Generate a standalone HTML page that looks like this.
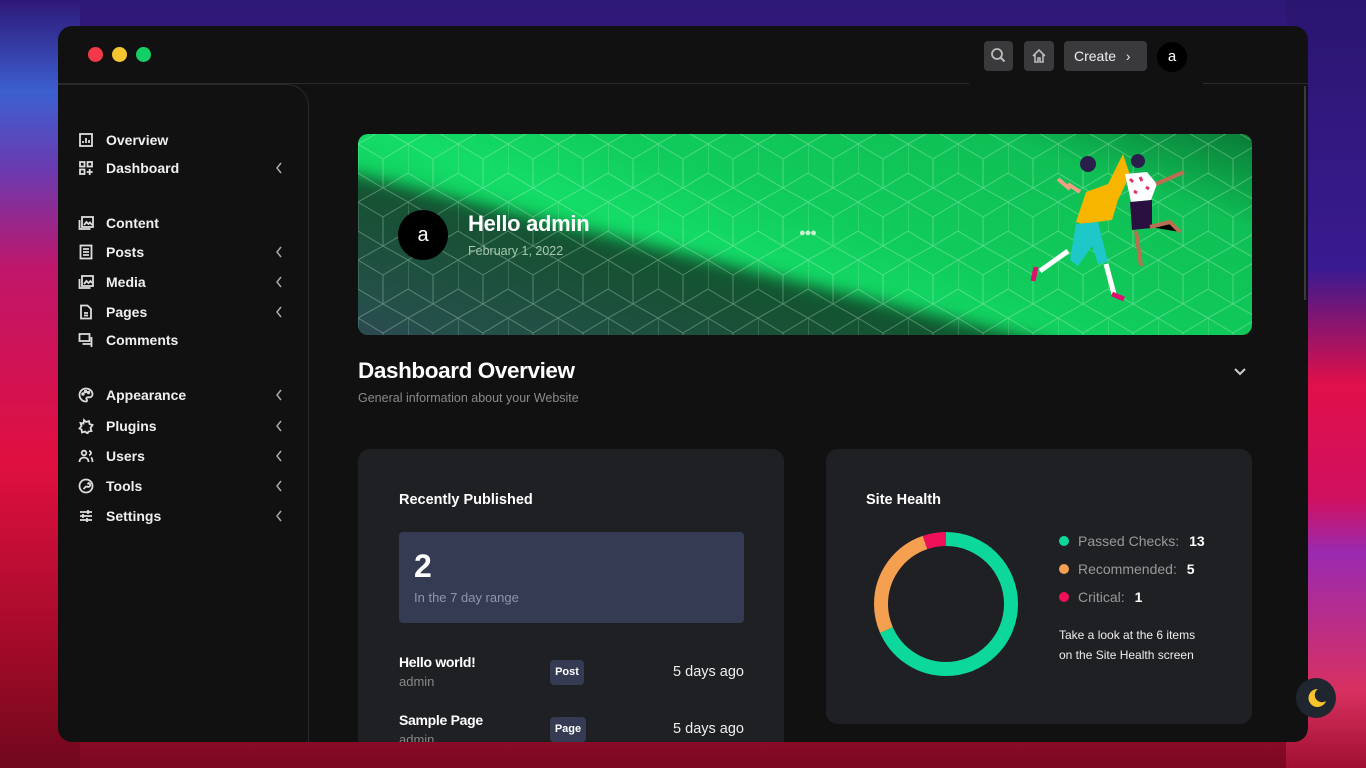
<!DOCTYPE html>
<html><head><meta charset="utf-8"><style>
*{margin:0;padding:0;box-sizing:border-box}
body{width:1366px;height:768px;overflow:hidden;position:relative;font-family:"Liberation Sans",sans-serif;
background:linear-gradient(180deg,#2e1878 0%,#3a1a80 30%,#7a1a70 55%,#c8104a 75%,#a00c30 92%,#7a0820 100%);}
.bgl{position:absolute;left:0;top:0;width:80px;height:768px;background:linear-gradient(180deg,#2e1878 0%,#3c60d0 12%,#6a3ab0 22%,#c0166a 35%,#e01040 60%,#a00a28 85%,#70081c 100%)}
.bgr{position:absolute;right:0;top:0;width:80px;height:768px;background:linear-gradient(180deg,#2a1670 0%,#3a1a90 35%,#e0104a 50%,#d01060 65%,#9a2ab0 72%,#d83060 90%,#a01030 100%)}
.win{position:absolute;left:58px;top:26px;width:1250px;height:716px;background:#111112;border-radius:14px;overflow:hidden}
.dot{position:absolute;top:21px;width:15px;height:15px;border-radius:50%}
.hline{position:absolute;top:57px;left:0;width:1250px;height:1px;background:#2a2a2c}
.side{position:absolute;left:0;top:58px;width:251px;height:700px;border-right:1px solid #2a2a2c;border-top-right-radius:22px;border-top:1px solid #2a2a2c}
.nav{position:absolute;left:20px;color:#f0f0f0;font-size:14px;font-weight:bold;display:flex;align-items:center;height:20px}
.nav svg{width:16px;height:16px;margin-right:12px;stroke:#ddd;fill:none;stroke-width:1.8}
.btn{position:absolute;top:15px;height:30px;background:#3a3a3c;border-radius:4px;color:#eee;font-size:14px}
.banner{position:absolute;left:300px;top:108px;width:894px;height:201px;border-radius:10px;overflow:hidden;
background:linear-gradient(200deg,#0a7a36 0%,#0fbf55 18%,#10cc5c 45%,#14dc68 60%,#0ec85a 80%,#0cc056 100%)}
.card{position:absolute;top:423px;width:426px;background:#1f2024;border-radius:12px}
</style></head><body>
<div class="bgl"></div><div class="bgr"></div>
<div class="win">
<div class="dot" style="left:30px;background:#f2394a"></div>
<div class="dot" style="left:54px;background:#f4c531"></div>
<div class="dot" style="left:78px;background:#14cf63"></div>
<div class="hline"></div>
<div style="position:absolute;left:911px;top:56px;width:234px;height:4px;background:#111112"></div>
<div class="btn" style="left:926px;width:29px"><svg width="29" height="30" viewBox="0 0 29 30"><circle cx="13" cy="13" r="5" stroke="#bbb" stroke-width="1.8" fill="none"/><path d="M16.5 16.5l4 4" stroke="#bbb" stroke-width="2"/></svg></div>
<div class="btn" style="left:966px;width:30px"><svg width="30" height="30" viewBox="0 0 30 30"><path d="M9 15l6-6 6 6M11 13v8h3v-4h2v4h3v-8" stroke="#bbb" stroke-width="1.6" fill="none"/></svg></div>
<div class="btn" style="left:1006px;width:83px;line-height:30px;padding-left:10px">Create <span style="margin-left:6px">›</span></div>
<div style="position:absolute;left:1099px;top:16px;width:30px;height:30px;border-radius:50%;background:#000;color:#fff;text-align:center;line-height:30px;font-size:15px">a</div>
<div style="position:absolute;left:1246px;top:60px;width:2px;height:214px;background:#3a3a3c"></div>
<div class="side"></div>
<div class="nav" style="top:104px"><svg viewBox="0 0 16 16"><rect x="2" y="2" width="12" height="12"/><path d="M5 11v-2M8 11V6M11 11V8"/></svg>Overview</div>
<div class="nav" style="top:132px"><svg viewBox="0 0 16 16"><rect x="2" y="2" width="4.5" height="4.5"/><rect x="9.5" y="2" width="4.5" height="4.5"/><rect x="2" y="9.5" width="4.5" height="4.5"/><path d="M11.7 9v6M8.7 12h6"/></svg>Dashboard</div>
<div class="nav" style="top:187px"><svg viewBox="0 0 16 16"><rect x="4" y="2" width="11" height="10"/><path d="M1.5 5v9h11M6 10l2.5-3 2 2 1.5-1.5 2 2.5"/></svg>Content</div>
<div class="nav" style="top:216px"><svg viewBox="0 0 16 16"><rect x="2.5" y="1.5" width="11" height="13"/><path d="M5 5h6M5 8h6M5 11h6"/></svg>Posts</div>
<div class="nav" style="top:246px"><svg viewBox="0 0 16 16"><rect x="4" y="2" width="11" height="10"/><path d="M1.5 5v9h11M6 10l2.5-3 2 2 2-2 1.5 2"/></svg>Media</div>
<div class="nav" style="top:276px"><svg viewBox="0 0 16 16"><path d="M3 1.5h6.5l3.5 3.5v9.5H3z"/><path d="M6 9h4M6 11.5h4"/></svg>Pages</div>
<div class="nav" style="top:304px"><svg viewBox="0 0 16 16"><path d="M1.5 2h10v7h-10zM4.5 12h9V5M13.5 12v3"/></svg>Comments</div>
<div class="nav" style="top:359px"><svg viewBox="0 0 16 16"><path d="M8 1.5a6.5 6.5 0 1 0 0 13c1.2 0 1.3-1.5.6-2.2s-.2-2 1-2h2a3 3 0 0 0 2.9-3C14.5 4 11.6 1.5 8 1.5z"/><circle cx="5" cy="7" r=".8"/><circle cx="7.5" cy="4.5" r=".8"/><circle cx="10.5" cy="5.5" r=".8"/></svg>Appearance</div>
<div class="nav" style="top:390px"><svg viewBox="0 0 16 16"><path d="M6 2l2 2 3-1 .5 3 3 1-2 3 1 3-3 .5-1 2-2.5-2-3 1-.5-3-2-1 2-2.5-1-3 3 .5z"/></svg>Plugins</div>
<div class="nav" style="top:420px"><svg viewBox="0 0 16 16"><circle cx="6" cy="5" r="2.3"/><path d="M1.5 14c0-3 2-4.5 4.5-4.5s4.5 1.5 4.5 4.5M11 3a2 2 0 0 1 0 4M13 9.5c1 .6 1.5 2 1.5 4.5"/></svg>Users</div>
<div class="nav" style="top:450px"><svg viewBox="0 0 16 16"><circle cx="8" cy="8" r="6.5"/><path d="M5.5 11l3-3M8.5 8a2 2 0 1 0 2.2-3l-1.2 1.3"/></svg>Tools</div>
<div class="nav" style="top:480px"><svg viewBox="0 0 16 16"><path d="M2 4h12M2 8h12M2 12h12M10 2v4M5 6v4M9 10v4"/></svg>Settings</div>
<svg width="250" height="500" style="position:absolute;left:0;top:0" fill="none" stroke="#aaa" stroke-width="1.5">
<path d="M223 137l-4 5 4 5M223 221l-4 5 4 5M223 251l-4 5 4 5M223 281l-4 5 4 5M223 364l-4 5 4 5M223 395l-4 5 4 5M223 425l-4 5 4 5M223 455l-4 5 4 5M223 485l-4 5 4 5"/></svg>

<div class="banner">
<div style="position:absolute;left:-20px;top:0;width:934px;height:240px;filter:blur(8px)">
<div style="position:absolute;left:0;top:0;width:934px;height:240px;clip-path:polygon(0 36px,840px 240px,0 240px);background:linear-gradient(196deg,#0a6a30 38%,#0b5a2a 50%,#1a5038 68%,#24504a 85%,#3a3e60 100%)"></div></div>
<svg width="894" height="201" style="position:absolute;left:0;top:0;opacity:.3">
<defs><pattern id="hx" width="50" height="58" patternUnits="userSpaceOnUse" x="0" y="-4"><path d="M0 14L25 0L50 14M0 14V43M25 29V58M0 43L25 58L50 43M25 29L50 14M25 29L0 14" stroke="#e8ffe8" stroke-width="1" fill="none"/></pattern></defs>
<rect width="894" height="201" fill="url(#hx)"/></svg>
<div style="position:absolute;left:40px;top:76px;width:50px;height:50px;border-radius:50%;background:#000;color:#fff;font-size:20px;text-align:center;line-height:50px">a</div>
<div style="position:absolute;left:110px;top:77px;color:#fff;font-size:22px;font-weight:bold;letter-spacing:-.3px">Hello admin</div>
<div style="position:absolute;left:110px;top:110px;color:#a8c8b0;font-size:12.5px">February 1, 2022</div>
<div style="position:absolute;left:441px;top:93px;color:#c8f0d0;font-size:11px;letter-spacing:-1px">●●●</div>
<svg width="200" height="170" viewBox="0 0 200 170" style="position:absolute;left:670px;top:5px">
<path d="M95 15l-15 30-22 8-10 30 6 2 30-4 6-20 12-25z" fill="#f7b500"/>
<circle cx="60" cy="25" r="8" fill="#2a1e4a"/>
<path d="M40 45l12 8M30 40l12 10" stroke="#f0a080" stroke-width="4"/>
<path d="M48 85l22-2 10 40-10 2-6-18-14 20-8-6z" fill="#1ec8c8"/>
<path d="M40 112l-28 20M78 125l8 30" stroke="#fff" stroke-width="5"/>
<path d="M8 128l-3 14M84 155l12 5" stroke="#e01070" stroke-width="5"/>
<circle cx="110" cy="22" r="7" fill="#2a1e4a"/>
<path d="M97 35l22-2 10 12-6 16-20 2z" fill="#fff"/><path d="M102 40l3 3M112 38l2 4M118 48l3 2M106 52l3 2" stroke="#e0306a" stroke-width="3"/>
<path d="M102 63l22-2 0 28-20 2z" fill="#2a1040"/>
<path d="M108 92l5 35M122 88l20-5 10 10M128 45l28-12" stroke="#b87050" stroke-width="4"/>
</svg>
</div>

<div style="position:absolute;left:300px;top:332px;color:#fff;font-size:22.5px;font-weight:bold;letter-spacing:-.4px">Dashboard Overview</div>
<div style="position:absolute;left:300px;top:365px;color:#8a8a8e;font-size:12.5px">General information about your Website</div>
<svg width="14" height="10" style="position:absolute;left:1175px;top:341px"><path d="M2 2l5 5 5-5" stroke="#ccc" stroke-width="2" fill="none"/></svg>

<div class="card" style="left:300px;height:320px">
<div style="position:absolute;left:41px;top:43px;color:#fff;font-size:14.5px;font-weight:bold">Recently Published</div>
<div style="position:absolute;left:41px;top:83px;width:345px;height:91px;background:#343b53;border-radius:4px">
<div style="position:absolute;left:15px;top:16px;color:#fff;font-size:32px;font-weight:bold">2</div>
<div style="position:absolute;left:15px;top:58px;color:#8f96a8;font-size:13px">In the 7 day range</div></div>
<div style="position:absolute;left:41px;top:205px;color:#fff;font-size:14px;font-weight:bold;letter-spacing:-.3px">Hello world!</div>
<div style="position:absolute;left:41px;top:225px;color:#888;font-size:13px">admin</div>
<div style="position:absolute;left:192px;top:211px;width:34px;height:25px;background:#343b53;border-radius:4px;color:#fff;font-size:11px;font-weight:bold;text-align:center;line-height:25px">Post</div>
<div style="position:absolute;right:40px;top:215px;color:#eee;font-size:14.5px">5 days ago</div>
<div style="position:absolute;left:41px;top:263px;color:#fff;font-size:14px;font-weight:bold;letter-spacing:-.3px">Sample Page</div>
<div style="position:absolute;left:41px;top:283px;color:#888;font-size:13px">admin</div>
<div style="position:absolute;left:192px;top:268px;width:36px;height:25px;background:#343b53;border-radius:4px;color:#fff;font-size:11px;font-weight:bold;text-align:center;line-height:25px">Page</div>
<div style="position:absolute;right:40px;top:272px;color:#eee;font-size:14.5px">5 days ago</div>
</div>

<div class="card" style="left:768px;height:275px">
<div style="position:absolute;left:40px;top:43px;color:#fff;font-size:14.5px;font-weight:bold">Site Health</div>
<svg width="160" height="160" style="position:absolute;left:40px;top:75px" viewBox="0 0 160 160">
<g transform="rotate(-90 80 80)" fill="none" stroke-width="14">
<circle cx="80" cy="80" r="65" stroke="#0bd89a" stroke-dasharray="279.4 408.4"/>
<circle cx="80" cy="80" r="65" stroke="#f5a050" stroke-dasharray="107.5 408.4" stroke-dashoffset="-279.4"/>
<circle cx="80" cy="80" r="65" stroke="#f0105a" stroke-dasharray="21.5 408.4" stroke-dashoffset="-386.9"/>
</g></svg>
<div style="position:absolute;left:233px;top:78px;font-size:14px;color:#999;line-height:28px">
<div><span style="display:inline-block;width:10px;height:10px;border-radius:50%;background:#0bd89a;margin-right:9px"></span>Passed Checks: <b style="color:#fff;margin-left:6px">13</b></div>
<div><span style="display:inline-block;width:10px;height:10px;border-radius:50%;background:#f5a050;margin-right:9px"></span>Recommended: <b style="color:#fff;margin-left:6px">5</b></div>
<div><span style="display:inline-block;width:10px;height:10px;border-radius:50%;background:#f0105a;margin-right:9px"></span>Critical: <b style="color:#fff;margin-left:6px">1</b></div>
</div>
<div style="position:absolute;left:233px;top:176px;color:#eee;font-size:12px;line-height:20px">Take a look at the 6 items<br>on the Site Health screen</div>
</div>
</div>
<div style="position:absolute;left:1296px;top:678px;width:40px;height:40px;border-radius:50%;background:#1f2630">
<svg width="40" height="40" viewBox="0 0 40 40"><path d="M22 11a9 9 0 1 0 8 12 7 7 0 0 1-8-12z" fill="#f6c52a"/></svg></div>
</body></html>
